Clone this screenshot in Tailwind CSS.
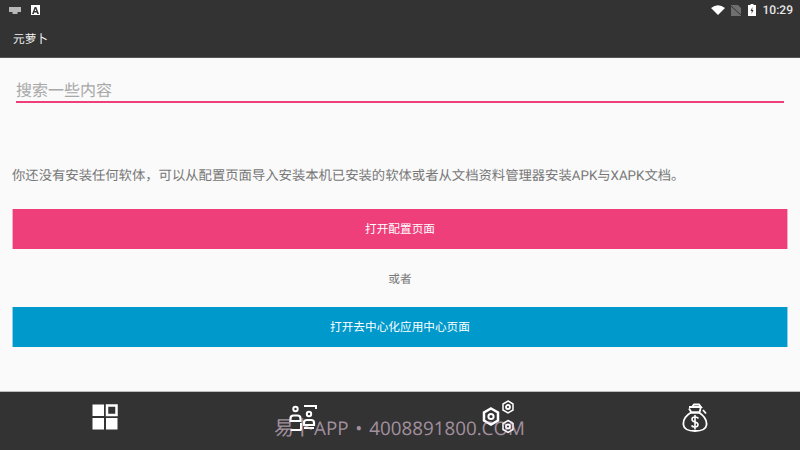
<!DOCTYPE html>
<html lang="en">
<head>
  <meta charset="UTF-8" />
  <title>元萝卜</title>
  <script src="https://cdn.jsdelivr.net/npm/@tailwindcss/browser@4"></script>
</head>
<body class="bg-[#fafafa] antialiased [text-rendering:geometricPrecision] font-['Roboto','Noto_Sans_CJK_SC',sans-serif]">
  <div class="relative w-[800px] h-[450px] overflow-hidden flex flex-col opacity-[.999]">

    <!-- Status bar -->
    <div class="h-6 bg-[#333333] flex items-center pl-[9px] pr-[7px] pb-[4px] shrink-0">
      <svg width="12" height="7" viewBox="0 0 12 7" fill="#b8b8b8"><path d="M0 0h12v5H8.500v2h-5V5H0z"/></svg>
      <div class="ml-[10px] w-[9px] h-[10px] bg-white flex items-center justify-center">
        <svg width="7" height="7" viewBox="0 0 7 7" fill="#333"><path d="M2.700 0h1.600L7 7H5.300l-.5-1.500H2.200L1.700 7H0zM2.700 4h1.600L3.500 1.800z"/></svg>
      </div>
      <div class="ml-auto flex items-center">
        <svg width="14" height="10" viewBox="0 0 14 10" fill="#fff"><path d="M0 3Q7-2.500 14 3L7 10z"/></svg>
        <svg class="ml-[6px]" width="10" height="11" viewBox="0 0 10 11"><path d="M0 0h7l3 3v8H0z" fill="#6f6f6f"/><path d="M0 1l10 9" stroke="#333" stroke-width="1"/></svg>
        <svg class="ml-[7px]" width="8" height="12" viewBox="0 0 8 12"><path d="M2.500 0h3v1H8v11H0V1h2.500z" fill="#fff"/><path d="M4.500 3 2.500 7h1.300L3.500 10l2-4H4.200z" fill="#333"/></svg>
        <span class="ml-[7px] text-[12px] leading-none text-[#e8e8e8] font-medium">10:29</span>
      </div>
    </div>

    <!-- Toolbar -->
    <div class="h-[34px] bg-[#333333] flex items-center pl-[13px] pb-[2px] shrink-0 border-b border-[#555]">
      <span class="text-[11.67px] text-[#f2f2f2]">元萝卜</span>
    </div>

    <!-- Content -->
    <main class="flex-1 flex flex-col">
      <div class="mx-4 mt-[21px] h-[24px] border-b-2 border-[#ef3f7b] text-[16px] leading-[24px] text-[#a8a8a8]">搜索一些内容</div>
      <p class="mt-[65px] mx-[12px] text-[13.33px] leading-[18px] text-[#777777] whitespace-nowrap">你还没有安装任何软体，可以从配置页面导入安装本机已安装的软体或者从文档资料管理器安装APK与XAPK文档。</p>
      <button class="mt-[23px] mx-[12px] h-10 pt-[2px] bg-[#ef3f7b] border-x border-x-[#f7aec8] text-white text-[11.67px] flex items-center justify-center shrink-0">打开配置页面</button>
      <div class="h-[58px] pt-[4px] flex items-center justify-center text-[11.67px] text-[#777777] shrink-0">或者</div>
      <button class="mx-[12px] h-10 pt-[2px] bg-[#0099cc] border-x border-x-[#8fd0e8] text-white text-[11.67px] flex items-center justify-center shrink-0">打开去中心化应用中心页面</button>
    </main>

    <!-- Bottom nav -->
    <nav class="h-[59px] bg-[#333333] border-t border-[#bdbdbd] grid grid-cols-4 shrink-0">
      <div class="flex justify-center pt-[12px] pl-[10px]">
        <svg width="26" height="26" viewBox="0 0 26 26" fill="#fff">
          <rect x="0.500" y="0.500" width="11.500" height="11.500"/>
          <rect x="15" y="1.500" width="9.500" height="9.500" fill="none" stroke="#fff" stroke-width="2.500"/>
          <rect x="0.500" y="14" width="11.500" height="11.500"/>
          <rect x="14" y="14" width="11.500" height="11.500"/>
        </svg>
      </div>
      <div class="flex justify-center pt-[12px] pl-[5px]">
        <svg width="28" height="28" viewBox="0 0 28 28" fill="none" stroke="#fff" stroke-width="2">
          <path d="M15 2h12v3"/>
          <circle cx="6.500" cy="5" r="2.200"/>
          <circle cx="20" cy="10" r="2.200"/>
          <path d="M1.500 17v-2.500q0-3 3-3h4q3 0 3 3V17z" stroke-width="2.200"/>
          <path d="M15 21v-2.500q0-2.500 3-2.500h4q3 0 3 2.500V21z" stroke-width="2.200"/>
          <path d="M1.500 26h11M12 19v7"/>
          <path d="M15 24h10"/>
        </svg>
      </div>
      <div class="flex justify-center pt-[8px] pr-[2px]">
        <svg width="34" height="36" viewBox="0 0 34 36" fill="none" stroke="#fff">
          <path d="M9 8.500l7 4v8l-7 4-7-4v-8z" stroke-width="2.500"/>
          <circle cx="9" cy="16.500" r="2.600" stroke-width="2"/>
          <path d="M26 1l5 3v6l-5 3-5-3v-6z" stroke-width="1.500"/>
          <circle cx="26" cy="7" r="2" stroke-width="1.800"/>
          <path d="M26 20.500l5 3v6l-5 3-5-3v-6z" stroke-width="1.500"/>
          <circle cx="26" cy="26.500" r="2" stroke-width="1.800"/>
        </svg>
      </div>
      <div class="flex justify-center pt-[11px] pr-[11px]">
        <svg width="26" height="29" viewBox="0 0 26 29" fill="none" stroke="#fff" stroke-width="1.800">
          <path d="M9 9.500C3 13 1 18 1.500 22c.5 4 4 6 11.500 6s11-2 11.500-6c.5-4-1.500-8.500-7.500-12.500z"/>
          <path d="M8 9.500h10M7 5.500l2.500 4M19 3.500l-1.500 6M7 4h12l-2-2.500h-5L10 4"/>
          <path d="M21 7l3 3.500"/>
          <path d="M16.500 15.500q-1-1.500-3.500-1.500-3 0-3 2.200t3 2.800 3 2.800-3 2.200q-2.500 0-3.500-1.500M13 12v14.500" stroke-width="1.600"/>
        </svg>
      </div>
    </nav>

    <!-- Watermark -->
    <div class="absolute left-[274px] top-[415px] font-['Open_Sans','Noto_Sans_CJK_SC',sans-serif] text-[18.8px] leading-[26px] [word-spacing:2px] text-[#ebd2e5]/60 whitespace-nowrap"><span class="text-[20px]">易卜</span>APP • 4008891800.COM</div>
  </div>
</body>
</html>
